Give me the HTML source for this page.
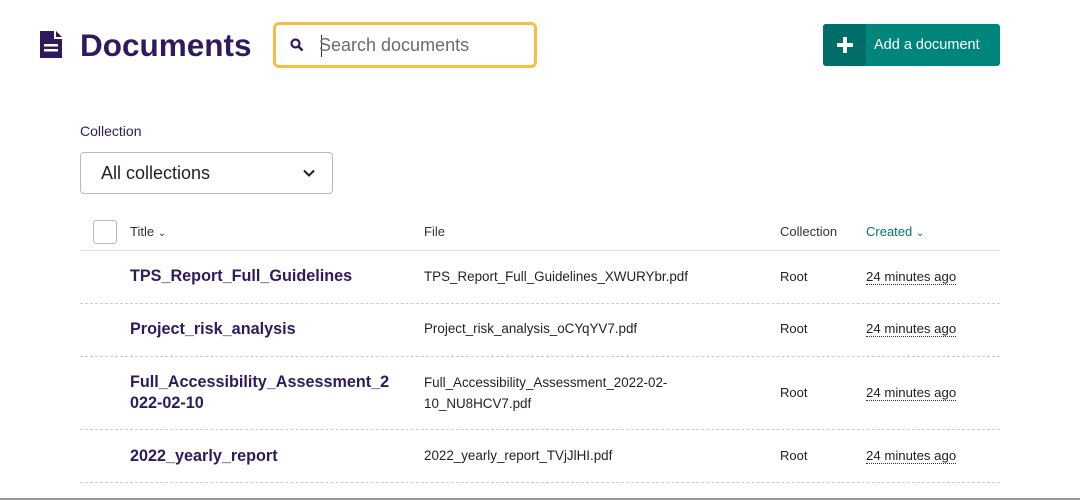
<!DOCTYPE html>
<html><head><style>
*{box-sizing:border-box;margin:0;padding:0}
body{width:1080px;height:500px;background:#fff;font-family:"Liberation Sans",sans-serif;position:relative;overflow:hidden;color:#231f20}
.a{position:absolute}
h1{position:absolute;left:80px;top:27px;font-size:31.5px;font-weight:bold;color:#2e1a5c;letter-spacing:0}
.search{left:273px;top:22px;width:264px;height:46px;border:3px solid #f9bd45;border-radius:6px;}
.search span{position:absolute;left:43px;top:10px;font-size:18px;color:#6b6b6b}
.caret{left:45px;top:10px;width:1px;height:22px;background:#333}
.btn{left:823px;top:24px;width:177px;height:42px;background:#00857d;border-radius:3px;overflow:hidden}
.btn .ic{position:absolute;left:0;top:0;width:43px;height:42px;background:#006e68}
.btn span{position:absolute;left:51px;top:13px;color:#fff;font-size:14.5px}
.sel{left:80px;top:152px;width:253px;height:42px;border:1px solid #bbb;border-radius:4px}
.sel span{position:absolute;left:20px;top:10px;font-size:18px;color:#231f20}
.hd{font-size:13px;color:#333;top:224px}
.t{font-size:16.2px;font-weight:bold;color:#2e1a5c;left:130px;line-height:21px}
.f{font-size:13.4px;color:#231f20;left:424px;line-height:21px}
.r{font-size:13px;left:780px}
.c{font-size:13.2px;left:866px;border-bottom:1px dotted #333;line-height:15px}
.dl{left:80px;width:920px;height:0;border-top:1px dashed #ccc}
</style></head><body>
<svg class="a" style="left:40px;top:31px" width="23" height="27" viewBox="0 0 23 27"><path d="M0 0H14V8H22V27H0Z" fill="#2e1a5c"/><path d="M16 0L22 6H16Z" fill="#2e1a5c"/><rect x="4" y="13" width="14" height="2.5" fill="#fff"/><rect x="4" y="18" width="14" height="2.5" fill="#fff"/></svg>
<h1>Documents</h1>
<div class="a search"><svg class="a" style="left:14px;top:13px" width="14" height="14" viewBox="0 0 14 14"><circle cx="5.5" cy="5.5" r="4" stroke="#2e1a5c" stroke-width="2.2" fill="none"/><path d="M8.5 8.5L12.5 12.5" stroke="#2e1a5c" stroke-width="2.5"/></svg><div class="a caret"></div><span>Search documents</span></div>
<div class="a btn"><div class="ic"><svg class="a" style="left:14px;top:13px" width="16" height="16"><rect x="6" y="0" width="4" height="16" fill="#fff"/><rect x="0" y="6" width="16" height="4" fill="#fff"/></svg></div><span>Add a document</span></div>
<div class="a" style="left:80px;top:123px;font-size:14px;color:#2e1a5c">Collection</div>
<div class="a sel"><span>All collections</span><svg class="a" style="left:222px;top:16px" width="12" height="9"><path d="M1 1.5L6 6.5L11 1.5" stroke="#231f20" stroke-width="2" fill="none"/></svg></div>
<div class="a" style="left:93px;top:220px;width:24px;height:24px;border:1px solid #bbb;border-radius:3px"></div>
<div class="a hd" style="left:130px">Title <span style="font-size:10px">⌄</span></div>
<div class="a hd" style="left:424px">File</div>
<div class="a hd" style="left:780px">Collection</div>
<div class="a hd" style="left:866px;color:#00756f">Created <span style="font-size:10px">⌄</span></div>
<div class="a" style="left:80px;top:250px;width:920px;height:1px;background:#ddd"></div>
<div class="a t" style="top:266px">TPS_Report_Full_Guidelines</div>
<div class="a f" style="top:266px">TPS_Report_Full_Guidelines_XWURYbr.pdf</div>
<div class="a r" style="top:269px">Root</div>
<div class="a c" style="top:269px">24 minutes ago</div>
<div class="a dl" style="top:303px"></div>
<div class="a t" style="top:319px">Project_risk_analysis</div>
<div class="a f" style="top:318px">Project_risk_analysis_oCYqYV7.pdf</div>
<div class="a r" style="top:321px">Root</div>
<div class="a c" style="top:321px">24 minutes ago</div>
<div class="a dl" style="top:356px"></div>
<div class="a t" style="top:372px">Full_Accessibility_Assessment_2<br>022-02-10</div>
<div class="a f" style="top:372px">Full_Accessibility_Assessment_2022-02-<br>10_NU8HCV7.pdf</div>
<div class="a r" style="top:385px">Root</div>
<div class="a c" style="top:385px">24 minutes ago</div>
<div class="a dl" style="top:429px"></div>
<div class="a t" style="top:446px">2022_yearly_report</div>
<div class="a f" style="top:445px">2022_yearly_report_TVjJlHI.pdf</div>
<div class="a r" style="top:448px">Root</div>
<div class="a c" style="top:448px">24 minutes ago</div>
<div class="a dl" style="top:482px"></div>
<div class="a" style="left:0;top:498px;width:1080px;height:2px;background:#999"></div>
</body></html>
